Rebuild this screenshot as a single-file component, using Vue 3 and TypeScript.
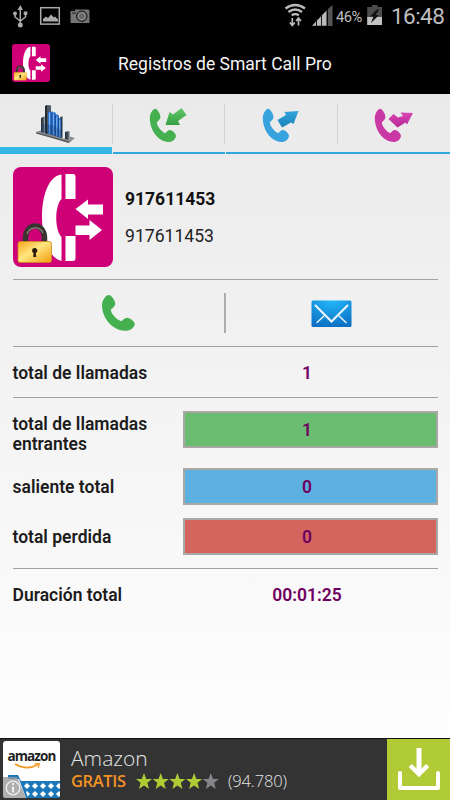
<script setup lang="ts">
interface Tab { name: string; color: string; arrow: string; light: string; dark: string }
interface Row { label: string; value: number; kind: string }

const tabs: Tab[] = [
  { name: 'incoming', color: '#45b050', light: '#62c867', dark: '#35a043', arrow: 'M32.5 0 37.5 7 29 13 31 17H16.5L20.5 4 24 6.5Z' },
  { name: 'outgoing', color: '#36a3de', light: '#2fa5dc', dark: '#1b82b8', arrow: 'M36.5 3 31.5 16 29 14.5 20 19.5 15.5 12 24 7 22.5 4Z' },
  { name: 'missed', color: '#ca38a5', light: '#da48b5', dark: '#b62794', arrow: 'M39 5 33 16.5 31.5 14.5 23.5 19.5 14.5 11 19.5 6 24 9.5 29 8 26.5 4.5Z' },
]
const rows: Row[] = [
  { label: 'total de llamadas entrantes', value: 1, kind: 'green' },
  { label: 'saliente total', value: 0, kind: 'blue' },
  { label: 'total perdida', value: 0, kind: 'red' },
]
const handset = 'M7 0C9 0 13 5 13.3 8.5C13.3 11 11 13 9 14.3C8 18 15 25 19.3 26.3C21 25 22.5 22.7 25 22.7C28 22.7 32.7 26.5 32.7 29C32.7 32 29 35 26 35.5C12 37.5 0 24 0 10C0 5 4 0 7 0Z'
</script>

<template>
  <div class="screen">
    <svg class="defs" width="0" height="0">
      <defs>
        <linearGradient id="gold" x1="0" y1="0" x2="1" y2="1">
          <stop offset="0" stop-color="#f9a51a" /><stop offset=".45" stop-color="#ffe680" /><stop offset="1" stop-color="#f59a0c" />
        </linearGradient>
        <symbol id="app-icon" viewBox="0 0 100 100">
          <rect width="100" height="100" rx="8" fill="#cf0077" />
          <g fill="#fff">
            <path d="M48.5 7.5C36 9 29 28 29 50S36 91 48.5 94V70C41.5 63 41.5 39 48.5 32Z" />
            <path d="M52.5 7H60Q62.5 7 62.5 10V32H52.5ZM52.5 69H62.5V91Q62.5 94 60 94H52.5Z" />
            <path d="M62.5 42 75 32.5V37.5H90V47.5H75V52ZM89 63 76.5 53V58.5H62.5V68H76.5V73Z" />
          </g>
          <path d="M12.5 76V71C12.5 55 31.5 55 31.5 71V76" fill="none" stroke="#3a3430" stroke-width="5.5" />
          <path d="M14 67C17 59 27 59 30 66" fill="none" stroke="#8b8580" stroke-width="1.3" />
          <rect x="5" y="74.5" width="33.5" height="21" rx="2" fill="url(#gold)" stroke="#c98a22" stroke-width=".8" />
          <circle cx="21.7" cy="83.5" r="2.6" fill="#2b1b08" /><path d="M20.7 84H22.7L23.2 90H20.2Z" fill="#2b1b08" />
        </symbol>
      </defs>
    </svg>

    <header class="status">
      <svg class="notices" width="92" height="32" viewBox="0 0 92 32">
        <g fill="none" stroke="#aaa" stroke-width="1.5">
          <path d="M20.3 9V24M15 13V17L20.3 21L25.5 17V13" />
          <rect x="40.7" y="7.7" width="18.6" height="16.4" />
        </g>
        <g fill="#aaa">
          <path d="M20.3 5 23 10H17.6Z" /><circle cx="20.3" cy="25" r="2.5" /><circle cx="15" cy="13.5" r="2" /><path d="M23.7 11.5H27.3V15H23.7Z" />
          <path d="M43 21.5V19L46 16.5 48 18 51 14.5 54 17.5 55 16.5 58 19.5V21.5Z" />
        </g>
        <path d="M70.5 11H75V9.5H88Q89.5 9.5 89.5 11V23H70.5Z" fill="#747474" />
        <circle cx="81.8" cy="16.2" r="5.2" fill="#666" stroke="#111" /><circle cx="81.8" cy="16.2" r="3.5" fill="none" stroke="#999" />
        <path d="M72 13H76M72 9.8H74" stroke="#222" />
      </svg>
      <div class="status-right">
        <svg width="50" height="32" viewBox="284 0 50 32">
          <g fill="none" stroke="#bbb" stroke-width="2.3"><path d="M285.5 8.5Q295.2 1.5 305 8.5M288.5 12Q295.2 7 302 12M291.7 15.3Q295.2 12.8 298.8 15.3" /></g>
          <path d="M292.3 18V25M289.8 22.5 292.3 25.5 294.8 22.5M298.5 25.5V18.5M296 21 298.5 18 301 21" fill="none" stroke="#bbb" stroke-width="1.7" />
          <path d="M328 9 332.5 5V26H328Z" fill="#555" /><path d="M312 25.8 327 10V25.8Z" fill="#bbb" />
          <path d="M316.5 19V26M321.5 14V26M327 9V26" stroke="#151515" stroke-width="1" />
        </svg>
        <span class="percent">46%</span>
        <svg width="16" height="32" viewBox="367 0 16 32">
          <path d="M372 5H377.5V7H382V25H367.2V7H372Z" fill="#4c4c4c" /><path d="M367.2 17H382V25H367.2Z" fill="#c2c2c2" />
          <path d="M377.5 9 370 16.5H373.5L371 23 379 15H375.5L379 10Z" fill="#111" />
        </svg>
        <span class="clock">16:48</span>
      </div>
    </header>

    <header class="titlebar">
      <svg class="mini-icon"><use href="#app-icon" /></svg>
      <h1>Registros de Smart Call Pro</h1>
    </header>

    <nav class="tabs">
      <div class="tab active">
        <svg width="40" height="40" viewBox="0 0 40 40">
          <defs>
            <linearGradient id="tower"><stop stop-color="#222d35" /><stop offset=".6" stop-color="#46545f" /><stop offset="1" stop-color="#b8c3ca" /></linearGradient>
            <linearGradient id="blue-tower"><stop stop-color="#1b4b97" /><stop offset=".4" stop-color="#67aef1" /><stop offset="1" stop-color="#1f5cb5" /></linearGradient>
          </defs>
          <path d="M0 28 8 25.5 39 34 33 39Z" fill="#8b8c8d" /><path d="M0 28 33 37.5V39L0 29.5Z" fill="#55585b" />
          <path d="M5 14 9 12V29L5 28Z" fill="url(#tower)" />
          <path d="M9 2 11 1V30L9 29Z" fill="#1f2a32" /><path d="M11 1 15 1.5V10H12V30H11Z" fill="#4d5a64" />
          <path d="M24 13 27 12.5V34L24 33Z" fill="#2b3740" /><path d="M26.5 13 29.5 12.5V34.5H26.5Z" fill="#e6edf0" />
          <g fill="#2a6fcb"><path d="M12 8 17 7.5V31L12 30Z" /><path d="M16 9 19 8 20 10V32L16 31Z" /><path d="M19 12 21 10 23 12V33L19 32Z" /><path d="M22 15 25 14V34L22 33Z" /></g>
          <path d="M13.5 8.5V30M17.3 10V31M20.7 12.5V32M23.7 16V33" stroke="#7dbbf3" stroke-width="1" />
          <path d="M15.8 9V31M19.4 11V32M22.6 14V33" stroke="#143f88" stroke-width=".8" />
          <path d="M29 28 33 27 34 28V36L29 35Z" fill="url(#tower)" /><path d="M5 20Q16 19 25 26V34L5 28Z" fill="#17376a" opacity=".3" />
        </svg>
      </div>
      <div v-for="tab in tabs" :key="tab.name" class="tab">
        <svg width="40" height="36" viewBox="0 0 40 36">
          <defs><linearGradient :id="'arrow-' + tab.name" x1="0" y1="0" x2="0" y2="1"><stop :stop-color="tab.light" /><stop offset="1" :stop-color="tab.dark" /></linearGradient></defs>
          <path :d="handset" :fill="tab.color" transform="translate(.8 .8) scale(.8 .93)" />
          <path :d="tab.arrow" :fill="`url(#arrow-${tab.name})`" />
        </svg>
      </div>
    </nav>

    <main>
      <section class="contact">
        <svg class="avatar"><use href="#app-icon" /></svg>
        <div class="numbers"><strong>917611453</strong><span>917611453</span></div>
      </section>

      <section class="actions">
        <div class="call"><svg width="33" height="36" viewBox="0 0 33 36"><path :d="handset" fill="#45b050" /></svg></div>
        <div class="mail">
          <svg width="41" height="28" viewBox="0 0 41 28">
            <defs><radialGradient id="mail-blue" cx=".5" cy="0" r="1"><stop stop-color="#23b8fa" /><stop offset="1" stop-color="#0c70c4" /></radialGradient></defs>
            <rect x=".5" y=".5" width="40" height="26.5" rx="1.5" fill="url(#mail-blue)" />
            <g fill="none" stroke="#eef7fd" stroke-linecap="round"><path d="M4.5 5.5 20.5 21.5 36.5 5.5" stroke-width="2" /><path d="M13 16 6 22.5M28 16 35 22.5" stroke-width="1.4" /></g>
          </svg>
        </div>
      </section>

      <section class="row total"><span class="label">total de llamadas</span><span class="value">1</span></section>
      <section class="bars">
        <div v-for="row in rows" :key="row.kind" class="row">
          <span class="label">{{ row.label }}</span><span class="value bar" :class="row.kind">{{ row.value }}</span>
        </div>
      </section>
      <section class="row duration"><span class="label">Duración total</span><span class="value">00:01:25</span></section>
    </main>

    <aside class="ad">
      <div class="ad-logo">
        <span class="brand">amazon</span>
        <svg class="cart" width="57" height="35" viewBox="0 0 57 35">
          <defs><pattern id="mesh" x="20" y="19" width="8" height="8" patternUnits="userSpaceOnUse"><rect width="8" height="8" fill="#1b77b9" /><path d="M4 .9 7.1 4 4 7.1 .9 4Z" fill="#fff" /></pattern></defs>
          <path d="M12 1Q24 8 35 1.5" fill="none" stroke="#f39a27" stroke-width="1.6" /><path d="M31.5 .8 36.5 .6 35 5" fill="none" stroke="#f39a27" stroke-width="1.2" />
          <path d="M5 12H15L18 18H57V35H23L16 16H5Z" fill="#1b77b9" /><path d="M20 20H57V35H25Z" fill="url(#mesh)" />
        </svg>
        <svg class="info" width="26" height="21" viewBox="0 0 26 21"><path d="M0 0H17L26 21H0Z" fill="#9a9a9a" opacity=".8" /><circle cx="13" cy="11" r="6.8" fill="none" stroke="#eee" stroke-width="1.3" /><path d="M13 6V8M13 9.5V15.5" stroke="#eee" stroke-width="2" /></svg>
      </div>
      <div class="ad-copy">
        <span class="ad-name">Amazon</span>
        <div class="ad-meta">
          <span class="free">GRATIS</span>
          <svg class="stars" width="83" height="17" viewBox="0 0 83 17">
            <path v-for="n in 5" :key="n" :transform="`translate(${(n - 1) * 16.7} 0)`" d="M8 0 10.2 6H16L11.4 9.8 13 16 8 12.4 3 16 4.6 9.8 0 6H5.8Z" :fill="n < 5 ? '#b0cc35' : '#85868a'" />
          </svg>
          <span class="reviews">(94.780)</span>
        </div>
      </div>
      <div class="download">
        <svg width="44" height="44" viewBox="0 0 44 44"><g fill="none" stroke="#fff"><path d="M3 26V41H41V26" stroke-width="4" stroke-linejoin="round" stroke-linecap="round" /><path d="M22 1V27" stroke-width="5" /><path d="M13.3 18.5 22 27 30.7 18.5" stroke-width="4.5" /></g></svg>
      </div>
    </aside>
  </div>
</template>

<style>
body { margin: 0; background: #000; }
</style>

<style scoped>
.screen { width: 450px; height: 800px; display: flex; flex-direction: column; overflow: hidden; font-family: Roboto, "Liberation Sans", sans-serif; background: linear-gradient(#eaeaea 94px, #fefefe 738px); }
svg { display: block; flex: none; }
.defs { position: absolute; }
.status { height: 32px; flex: none; display: flex; justify-content: space-between; background: #000; color: #bebebe; }
.status-right { display: flex; align-items: center; padding-right: 5px; }
.percent { box-sizing: border-box; width: 33px; padding: 1px 0 0 2px; font-size: 14.7px; line-height: 32px; letter-spacing: -.5px; white-space: nowrap; }
.clock { width: 54px; margin-left: 8px; font-size: 22.5px; letter-spacing: -.55px; line-height: 30px; white-space: nowrap; }
.titlebar { height: 62px; flex: none; display: flex; align-items: center; background: #000; box-sizing: border-box; padding-left: 12px; }
.mini-icon { width: 38px; height: 38px; }
h1 { margin: 1px 0 0 68px; color: #f5f5f5; font-size: 17.5px; font-weight: 400; line-height: 24px; white-space: nowrap; }
.tabs { height: 60px; flex: none; display: grid; grid-template-columns: repeat(4, 112.5px); box-sizing: border-box; }
.tab { position: relative; box-sizing: border-box; padding: 14px 0 0 36.2px; margin-left: .5px; border-bottom: 2px solid #2eaadc; }
.tab:not(:last-child)::after { content: ""; position: absolute; right: 0; top: 10px; width: 1px; height: 40px; background: #d3d3d3; }
.tab.active { padding: 10px 0 0 36px; border-bottom: 7px solid #33b5e5; margin: 0 1px 0 0; }
.tab.active::after { right: -1px; }
main { flex: 1; padding: 0 12.5px; display: flex; flex-direction: column; }
.contact { box-sizing: border-box; height: 126px; border-bottom: 1px solid #a3a3a3; display: flex; padding-top: 13px; }
.avatar { width: 100px; height: 100px; }
.numbers { display: flex; flex-direction: column; padding: 20px 0 0 12.5px; color: #222; font-size: 17.6px; line-height: 24px; gap: 13px; }
.numbers strong { color: #111; font-weight: 700; font-size: 17.5px; }
.actions { height: 66px; border-bottom: 1px solid #a0a0a0; display: grid; grid-template-columns: 1fr 1fr; position: relative; }
.actions::after { content: ""; position: absolute; left: 211.5px; top: 13px; width: 1.5px; height: 40px; background: #adadad; }
.call { padding: 15px 0 0 89.7px; }
.mail { padding: 20px 0 0 86px; }
.row { display: grid; grid-template-columns: 170px 1fr; align-items: center; }
.label { color: #1c1c1c; font-size: 17.5px; font-weight: 600; line-height: 20px; max-width: 150px; }
.value { color: #700060; text-align: center; font-size: 17.5px; font-weight: 600; padding-right: 6px; }
.total { box-sizing: border-box; height: 51px; border-bottom: 1px solid #a0a0a0; padding-top: 1px; }
.bars { padding: 13px 0; border-bottom: 1px solid #a0a0a0; display: flex; flex-direction: column; }
.bars .row { height: 50px; align-items: start; }
.bars .row:first-child { height: 57px; }
.bars .row:last-child { height: 37px; }
.bars .label { padding-top: 9px; }
.bars .row:first-child .label { padding-top: 3px; }
.bar { height: 37px; box-sizing: border-box; border: 2px solid #aaa7a4; line-height: 35px; }
.green { background: #6abd70; }
.blue { background: #5db1e0; }
.red { background: #d4655e; }
.duration { height: 51px; }
.ad { height: 62px; flex: none; display: flex; background: #333; border-top: 1px solid #111; box-sizing: border-box; font-family: "Open Sans", sans-serif; }
.ad-logo { width: 57px; height: 57px; margin: 2px 0 0 3px; background: #fff; border-radius: 3px; position: relative; display: flex; flex-direction: column; overflow: hidden; }
.brand { text-align: center; font: 700 13.5px/17px "Open Sans", sans-serif; letter-spacing: -.9px; color: #222; padding-top: 7px; height: 15px; }
.info { position: absolute; left: -3px; bottom: 0; }
.ad-copy { width: 316px; padding-left: 11px; color: #e4e4e4; }
.ad-name { display: block; font-size: 21px; font-weight: 300; line-height: 22px; padding-top: 8px; }
.ad-meta { display: flex; align-items: center; height: 20px; margin-top: 2px; line-height: 20px; }
.free { width: 65px; color: #f39224; font-size: 16.5px; font-weight: 600; letter-spacing: -.35px; }
.reviews { margin-left: 9px; font-size: 16.5px; font-weight: 300; letter-spacing: -.15px; }
.download { flex: 1; background: #b0cb36; padding: 8px 0 0 10px; }
</style>
